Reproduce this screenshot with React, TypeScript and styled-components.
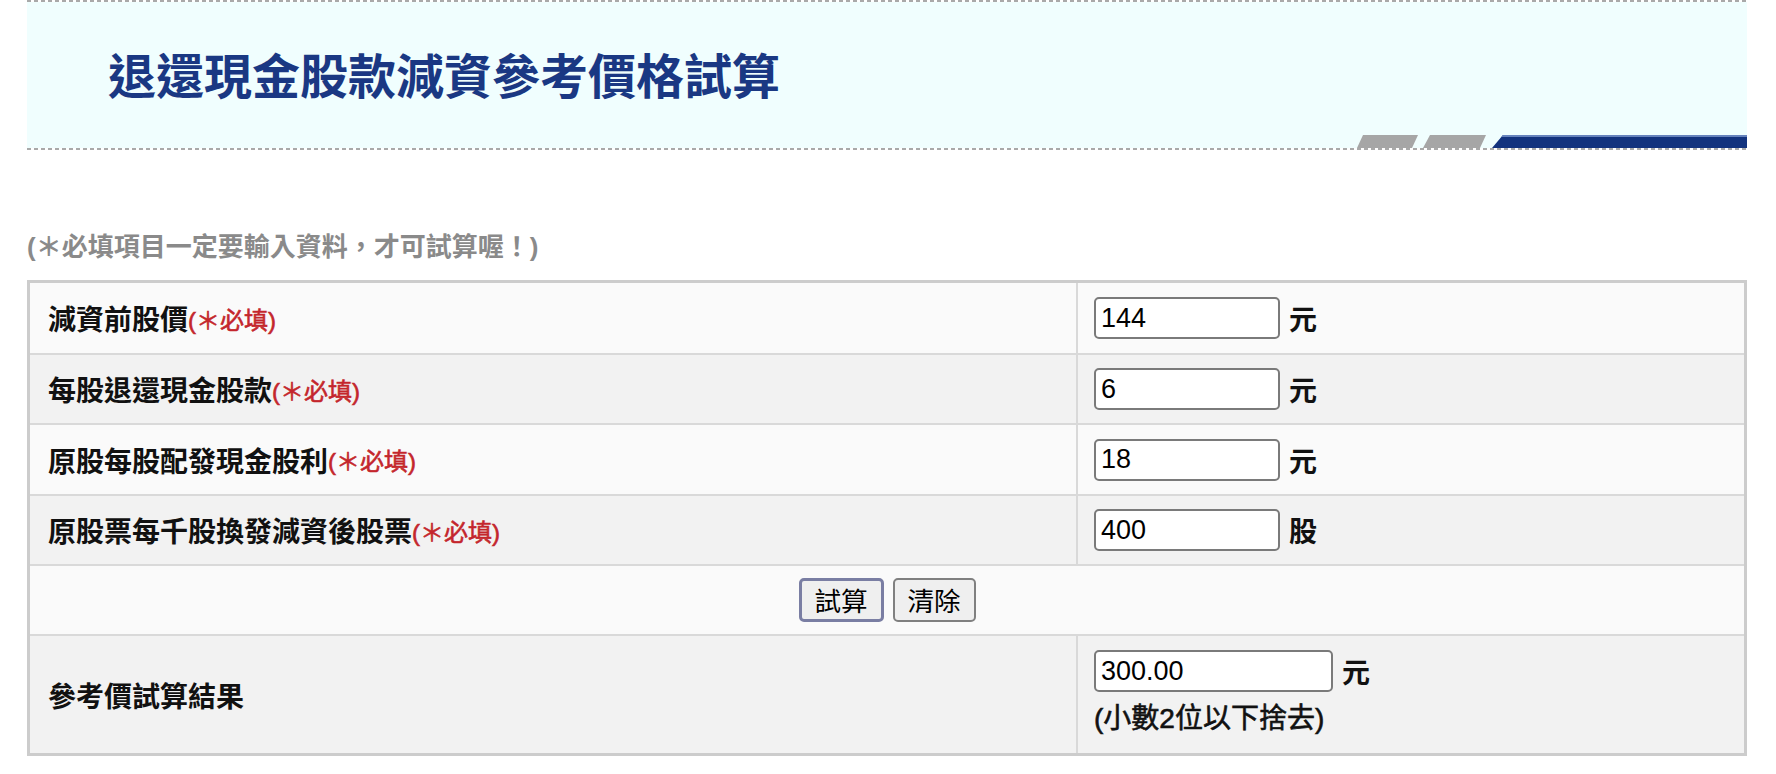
import React from "react";
import styled, { createGlobalStyle } from "styled-components";

const GlobalStyle = createGlobalStyle`
  html, body {
    margin: 0;
    padding: 0;
    background: #ffffff;
  }
  body {
    font-family: "Liberation Sans", "Noto Sans CJK TC", sans-serif;
    color: #111;
  }
`;

const Page = styled.div`
  width: 1720px;
  margin-left: 27px;
`;

const dash = "repeating-linear-gradient(to right, #a9a9a9 0 4px, transparent 4px 7px)";

const Header = styled.header`
  position: relative;
  box-sizing: border-box;
  height: 150px;
  border-top: 2px solid transparent;
  border-bottom: 2px solid transparent;
  background: ${dash} left top / 100% 2px no-repeat border-box,
    ${dash} left bottom / 100% 2px no-repeat border-box,
    linear-gradient(#f0fefe, #f0fefe) padding-box;
  display: flex;
  align-items: center;
  padding-left: 81px;
`;

const Title = styled.h1`
  margin: 0;
  font-family: "Noto Sans CJK TC", sans-serif;
  font-size: 48px;
  line-height: 1;
  font-weight: 700;
  color: #1a3883;
  padding-bottom: 4px;
`;

const Stripes = styled.svg`
  position: absolute;
  right: 0;
  bottom: 0;
  display: block;
`;

const Note = styled.p`
  margin: 79px 0 15px;
  font-size: 26px;
  line-height: 36px;
  font-weight: 700;
  color: #8a8a8a;
`;

const Table = styled.div`
  border: 3px solid #cccccc;
  background: #d9d9d9;
  display: flex;
  flex-direction: column;
  gap: 2px;
`;

const Row = styled.div<{ $h: number }>`
  display: grid;
  grid-template-columns: 1046px 1fr;
  gap: 2px;
  height: ${(p) => p.$h}px;
`;

const Cell = styled.div<{ $alt?: boolean }>`
  background: ${(p) => (p.$alt ? "#f2f2f2" : "#fafafa")};
  display: flex;
  align-items: center;
  padding-left: 18px;
`;

const ValueCell = styled(Cell)`
  padding-left: 16px;
`;

const ResultCell = styled(ValueCell)`
  flex-direction: column;
  align-items: flex-start;
  justify-content: center;
`;

const ActionCell = styled(Cell)`
  grid-column: 1 / -1;
  justify-content: center;
  padding-left: 0;
  gap: 9px;
`;

const Label = styled.span`
  font-size: 28px;
  font-weight: 700;
  color: #111;
`;

const Required = styled.span`
  font-size: 24px;
  font-weight: 400;
  -webkit-text-stroke: 0.6px currentColor;
  color: #c4262c;
`;

const InputLine = styled.div`
  display: flex;
  align-items: center;
`;

const Field = styled.input<{ $w: number }>`
  box-sizing: border-box;
  width: ${(p) => p.$w}px;
  height: 42px;
  border: 2px solid #7a7a7a;
  border-radius: 5px;
  padding: 0 5px;
  font-family: "Liberation Sans", sans-serif;
  font-size: 27px;
  color: #000;
  background: #fff;
  outline: none;
`;

const Unit = styled.span`
  margin-left: 9px;
  font-size: 28px;
  font-weight: 700;
  color: #111;
`;

const ResultNote = styled.div`
  margin-top: 7px;
  font-size: 28px;
  line-height: 40px;
  font-weight: 400;
  -webkit-text-stroke: 0.6px currentColor;
  color: #111;
`;

const Button = styled.button<{ $primary?: boolean }>`
  box-sizing: border-box;
  height: 44px;
  padding: 0 13px;
  font-family: "Noto Sans CJK TC", sans-serif;
  font-size: 26.5px;
  line-height: 1;
  color: #000;
  background: #efefef;
  border: ${(p) => (p.$primary ? "3px solid #7a7ea3" : "2px solid #808080")};
  border-radius: 5px;
  cursor: pointer;
`;

const rows = [
  { label: "減資前股價", value: "144", unit: "元", h: 70 },
  { label: "每股退還現金股款", value: "6", unit: "元", h: 68 },
  { label: "原股每股配發現金股利", value: "18", unit: "元", h: 69 },
  { label: "原股票每千股換發減資後股票", value: "400", unit: "股", h: 68 },
];

export default function App() {
  return (
    <>
      <GlobalStyle />
      <Page>
        <Header>
          <Title>退還現金股款減資參考價格試算</Title>
          <Stripes width="390" height="13" viewBox="0 0 390 13">
            <polygon points="0,13 6,0 61,0 55,13" fill="#a6a6a6" />
            <polygon points="66,13 73,0 129,0 123,13" fill="#a6a6a6" />
            <polygon points="135,13 146,0 390,0 390,13" fill="#13337e" />
            <polygon points="146,0 390,0 390,2 144.3,2" fill="#6683bd" />
          </Stripes>
        </Header>
        <Note>(＊必填項目一定要輸入資料，才可試算喔！)</Note>
        <Table>
          {rows.map((r, i) => (
            <Row key={r.label} $h={r.h}>
              <Cell $alt={i % 2 === 1}>
                <Label>{r.label}</Label>
                <Required>(＊必填)</Required>
              </Cell>
              <ValueCell $alt={i % 2 === 1}>
                <InputLine>
                  <Field $w={186} defaultValue={r.value} />
                  <Unit>{r.unit}</Unit>
                </InputLine>
              </ValueCell>
            </Row>
          ))}
          <Row $h={68}>
            <ActionCell>
              <Button $primary>試算</Button>
              <Button>清除</Button>
            </ActionCell>
          </Row>
          <Row $h={117}>
            <Cell $alt>
              <Label>參考價試算結果</Label>
            </Cell>
            <ResultCell $alt>
              <InputLine>
                <Field $w={239} defaultValue="300.00" />
                <Unit>元</Unit>
              </InputLine>
              <ResultNote>(小數2位以下捨去)</ResultNote>
            </ResultCell>
          </Row>
        </Table>
      </Page>
    </>
  );
}
